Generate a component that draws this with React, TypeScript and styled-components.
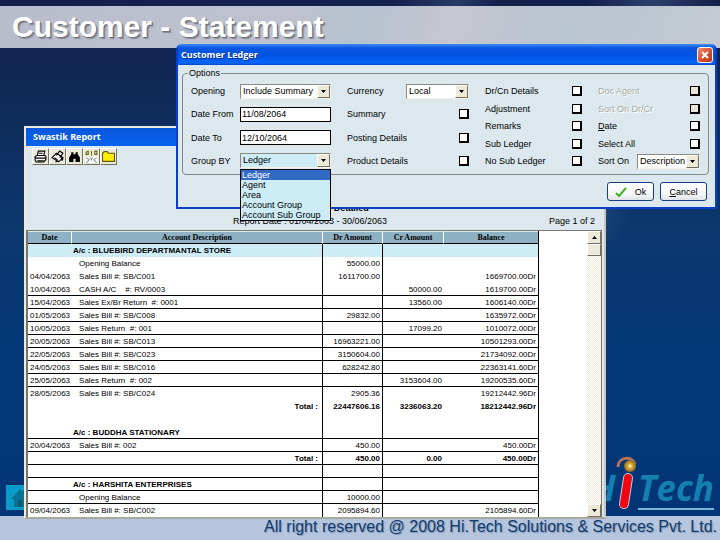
import React from "react";
import styled, { createGlobalStyle } from "styled-components";

const face = "#dde8ee";

const GlobalStyle = createGlobalStyle`
  * { box-sizing: border-box; }
  body { margin: 0; font-family: "Liberation Sans", Arial, sans-serif; color: #000; }
  button, input, select { font: inherit; color: inherit; margin: 0; padding: 0; }
`;

const Slide = styled.div`
  position: relative;
  min-height: 100vh;
  display: flex;
  flex-direction: column;
  overflow: hidden;
  background:
    linear-gradient(112deg, transparent 48%, #5d83ad44 56%, transparent 61%, transparent 72%, #6f93b944 80%, transparent 88%) top / 100% 240px no-repeat,
    linear-gradient(180deg, #13204c 0%, #102a58 18%, #0b386d 42%, #043878 65%, #033576 100%);
`;

const Heading = styled.header`
  margin-top: 6px;
  height: 42px;
  padding-left: 12px;
  display: flex;
  align-items: center;
  background: linear-gradient(112deg, #b9bccb 0%, #bfc2ce 40%, #b5c2cf 50%, #c6c6d0 62%, #b9c5d0 78%, #c4cad2 100%);
  h1 {
    margin: 0;
    font-size: 30px;
    line-height: 42px;
    color: #fff;
    white-space: nowrap;
    text-shadow: 1px 1px 0 #70747c, 2px 2px 1px #8a8d98;
  }
`;

const Scenery = styled.div`
  flex: 1;
  display: flex;
  justify-content: space-between;
  align-items: flex-end;
  padding: 0 6px 6px 6px;
`;

const HomeLink = styled.a`
  display: block;
  width: 24px;
  height: 25px;
  background: #0b9bc9;
  svg { display: block; }
`;

const Logo = styled.div`
  display: flex;
  align-items: flex-end;
  font: italic 700 35px/38px "Open Sans", sans-serif;
  color: #1580b0;
  svg { display: block; width: 22px; height: 54px; }
`;

const LogoPart = styled.span<{ $underline?: boolean }>`
  height: 41px;
  line-height: 38px;
  border-bottom: 2px solid ${(p) => (p.$underline ? "#74b9dd" : "transparent")};
`;

const Footer = styled.footer`
  height: 24px;
  padding-right: 3px;
  background: linear-gradient(90deg, #b3c4dc, #b5c6de);
  text-align: right;
  font-size: 16px;
  line-height: 22px;
  color: #123a6c;
  white-space: nowrap;
  text-shadow: 1px 1px 1px #8297b6;
`;

const ReportWindow = styled.section`
  position: absolute;
  left: 24px;
  right: 114px;
  top: 126px;
  border: 2px solid #eceade;
  border-right-color: #c9c8be;
  border-bottom-color: #a8a89f;
  background: ${face};
`;

const ReportTitle = styled.h2`
  margin: 0;
  height: 18px;
  padding-left: 7px;
  font: 700 9px/18px "Open Sans", sans-serif;
  color: #fff;
  background: linear-gradient(180deg, #0a56dd, #0863f0);
`;

const Toolbar = styled.div`
  display: flex;
  padding: 2px 6px 0;
`;

const ToolButton = styled.button`
  width: 17px;
  height: 17px;
  display: grid;
  place-items: center;
  background: #ece9d8;
  border: 1px solid #fff;
  border-right-color: #716f64;
  border-bottom-color: #716f64;
  svg { display: block; }
`;

const ReportCaption = styled.div`
  position: relative;
  height: 65px;
  padding: 37px 10px 0 0;
  text-align: center;
  font-size: 9px;
  line-height: 13px;
  b, span { display: block; }
`;

const PageCount = styled.span`
  position: absolute;
  right: 9px;
  bottom: 2px;
`;

const Sheet = styled.div`
  display: flex;
  margin: 0 2px 0 0;
  border: 1px solid #77776f;
  border-width: 1px 1px 0 2px;
  background: #fff;
`;

const Ledger = styled.table`
  flex: 1;
  min-width: 0;
  margin-right: 48px;
  table-layout: fixed;
  border-collapse: separate;
  border-spacing: 0;
  border-right: 1px solid #000;
  font-size: 8px;
  line-height: 10px;
  white-space: nowrap;
  th, td { height: 13px; padding: 0 2px; overflow: hidden; }
  td { padding-top: 2px; }
  th {
    font: 700 8px/11px "Liberation Serif", serif;
    background: #8fb1c4;
    border-bottom: 1px solid #000;
    border-top: 1px solid #dfeaf0;
    border-right: 1px solid #fff;
  }
  th:last-child { border-right: 0; }
`;

const Row = styled.tr<{ $line?: boolean; $bold?: boolean; $tint?: boolean }>`
  background: ${(p) => (p.$tint ? "#cdecf6" : "#fff")};
  font-weight: ${(p) => (p.$bold ? 700 : 400)};
  td {
    border-bottom: ${(p) => (p.$line ? "1px solid #000" : "0")};
    padding-bottom: ${(p) => (p.$line ? 0 : 1)}px;
  }
`;

const DateCell = styled.td``;
const TextCell = styled.td<{ $kind: "account" | "entry" | "total" }>`
  && { padding-left: ${(p) => (p.$kind === "account" ? 1 : 7)}px; padding-right: 4px; }
  text-align: ${(p) => (p.$kind === "total" ? "right" : "left")};
  border-right: 1px solid #000;
  white-space: pre;
`;
const AmountCell = styled.td<{ $rule?: boolean }>`
  text-align: right;
  border-right: ${(p) => (p.$rule ? "1px solid #000" : "0")};
`;

const ScrollBar = styled.div`
  width: 14px;
  display: flex;
  flex-direction: column;
  background: repeating-conic-gradient(#ece9d8 0 25%, #fff 0 50%) 0 0 / 2px 2px;
`;

const ScrollButton = styled.button`
  height: 13px;
  display: grid;
  place-items: center;
  background: #ece9d8;
  border: 1px solid #fff;
  border-right-color: #716f64;
  border-bottom-color: #716f64;
`;

const Thumb = styled.div`
  height: 12px;
  margin-bottom: auto;
  background: #ece9d8;
  border: 1px solid #fff;
  border-right-color: #716f64;
  border-bottom-color: #716f64;
`;

const Dialog = styled.section`
  position: absolute;
  left: 176px;
  right: 3px;
  top: 44px;
  z-index: 2;
  border: 2px solid #0a3cc4;
  border-top: 0;
  border-radius: 6px 6px 0 0;
  background: ${face};
  font-size: 9px;
  line-height: 14px;
`;

const DialogTitle = styled.div`
  height: 21px;
  display: flex;
  align-items: center;
  justify-content: space-between;
  padding: 0 2px 0 3px;
  border-radius: 4px 4px 0 0;
  background: linear-gradient(180deg, #3d8cf7 0, #0a56e0 4px, #0054e3 12px, #0566fb 19px, #0846c4 21px);
  color: #fff;
  h2 { margin: 0; font: 700 9px/20px "Open Sans", sans-serif; text-shadow: 1px 1px 0 #0a2f8c; }
`;

const CloseButton = styled.button`
  width: 16px;
  height: 16px;
  display: grid;
  place-items: center;
  border: 1px solid #fff;
  border-radius: 3px;
  background: linear-gradient(135deg, #ee8a6c, #d8482a 60%, #b83517);
`;

const Options = styled.fieldset`
  margin: 1px 6px 0 4px;
  border: 1px solid #7f8a8a;
  border-radius: 4px;
  padding: 4px 8px 6px;
  height: 109px;
  display: grid;
  grid-template-columns: 140px 122px 97px 1fr;
  column-gap: 16px;
  legend { padding: 0 1px; margin-left: -3px; line-height: 14px; height: 14px; }
`;

const Column = styled.div`
  height: 84px;
  display: flex;
  flex-direction: column;
  justify-content: space-between;
`;

const Field = styled.label<{ $disabled?: boolean }>`
  position: relative;
  height: 14px;
  display: flex;
  align-items: center;
  justify-content: space-between;
  white-space: nowrap;
  color: ${(p) => (p.$disabled ? "#a9aca6" : "#000")};
  text-shadow: ${(p) => (p.$disabled ? "1px 1px 0 #fff" : "none")};
`;

const Tick = styled.input`
  appearance: none;
  width: 10px;
  height: 10px;
  border: 2px solid #000;
  border-width: 1px 2px 2px 1px;
  background: #fff;
  &:checked { background: #316ac5; }
  &:disabled { background: #e9e6d6; }
`;

const DateInput = styled.input`
  width: 91px;
  height: 15px;
  border: 1px solid #000;
  border-radius: 0;
  background: #fff;
  padding-left: 1px;
`;

const Picker = styled.span<{ $w: number; $tint?: boolean }>`
  width: ${(p) => p.$w}px;
  height: 15px;
  display: grid;
  border: 1px solid #8b8a80;
  border-right-color: #f4f2e8;
  border-bottom-color: #f4f2e8;
  background: ${(p) => (p.$tint ? "#cdecf6" : "#fff")};
  select {
    grid-area: 1 / 1;
    appearance: none;
    min-width: 0;
    width: 100%;
    height: 13px;
    padding-left: 2px;
    border: 0;
    border-radius: 0;
    background: transparent;
    line-height: 13px;
  }
`;

const PickerArrow = styled.span`
  grid-area: 1 / 1;
  justify-self: end;
  width: 13px;
  height: 13px;
  display: grid;
  place-items: center;
  pointer-events: none;
  background: #ece9d8;
  border: 1px solid #fff;
  border-right-color: #716f64;
  border-bottom-color: #716f64;
`;

const Menu = styled.ul`
  position: absolute;
  right: 0;
  top: 15px;
  width: 91px;
  margin: 0;
  padding: 0;
  border: 1px solid #000;
  background: #cdecf6;
  list-style: none;
  line-height: 10px;
`;

const MenuItem = styled.li<{ $on: boolean }>`
  padding-left: 1px;
  background: ${(p) => (p.$on ? "#316ac5" : "transparent")};
  color: ${(p) => (p.$on ? "#fff" : "#000")};
`;

const Actions = styled.div`
  display: flex;
  justify-content: flex-end;
  gap: 6px;
  padding: 7px 8px 6px;
`;

const ActionButton = styled.button`
  width: 47px;
  height: 19px;
  display: flex;
  align-items: center;
  justify-content: center;
  gap: 8px;
  border: 1px solid #12407c;
  border-radius: 3px;
  background: linear-gradient(180deg, #fff, #f3f5f5 70%, #dfe3e6);
`;

const Arrow = ({ up = false }: { up?: boolean }) => (
  <svg width="5" height="3" viewBox="0 0 5 3" aria-hidden="true">
    <path d={up ? "M0 3H5L2.500 0Z" : "M0 0H5L2.500 3Z"} fill="#000" />
  </svg>
);

const Check = ({ label, disabled, children }: { label?: string; disabled?: boolean; children?: React.ReactNode }) => (
  <Field $disabled={disabled}>
    <span>{children ?? label}</span>
    <Tick type="checkbox" disabled={disabled} />
  </Field>
);

const Choice = ({ label, w, options, tint, children }: { label: string; w: number; options: string[]; tint?: boolean; children?: React.ReactNode }) => (
  <Field>
    <span>{label}</span>
    <Picker $w={w} $tint={tint}>
      <select aria-label={label}>{options.map((o) => <option key={o}>{o}</option>)}</select>
      <PickerArrow><Arrow /></PickerArrow>
    </Picker>
    {children}
  </Field>
);

type Entry = { date?: string; text?: string; dr?: string; cr?: string; bal?: string; kind?: "account" | "total"; line?: boolean; tint?: boolean };

const entries: Entry[] = [
  { text: "A/c : BLUEBIRD DEPARTMANTAL STORE", kind: "account", tint: true },
  { text: "Opening Balance", dr: "55000.00" },
  { date: "04/04/2063", text: "Sales Bill #: SB/C001", dr: "1611700.00", bal: "1669700.00Dr" },
  { date: "10/04/2063", text: "CASH A/C    #: RV/0003", cr: "50000.00", bal: "1619700.00Dr", line: true },
  { date: "15/04/2063", text: "Sales Ex/Br Return  #: 0001", cr: "13560.00", bal: "1606140.00Dr", line: true },
  { date: "01/05/2063", text: "Sales Bill #: SB/C008", dr: "29832.00", bal: "1635972.00Dr", line: true },
  { date: "10/05/2063", text: "Sales Return  #: 001", cr: "17099.20", bal: "1010072.00Dr", line: true },
  { date: "20/05/2063", text: "Sales Bill #: SB/C013", dr: "16963221.00", bal: "10501293.00Dr", line: true },
  { date: "22/05/2063", text: "Sales Bill #: SB/C023", dr: "3150604.00", bal: "21734092.00Dr", line: true },
  { date: "24/05/2063", text: "Sales Bill #: SB/C016", dr: "628242.80", bal: "22363141.60Dr", line: true },
  { date: "25/05/2063", text: "Sales Return  #: 002", cr: "3153604.00", bal: "19200535.60Dr", line: true },
  { date: "28/05/2063", text: "Sales Bill #: SB/C024", dr: "2905.36", bal: "19212442.96Dr" },
  { text: "Total :", dr: "22447606.16", cr: "3236063.20", bal: "18212442.96Dr", kind: "total" },
  {},
  { text: "A/c : BUDDHA STATIONARY", kind: "account", line: true },
  { date: "20/04/2063", text: "Sales Bill #: 002", dr: "450.00", bal: "450.00Dr", line: true },
  { text: "Total :", dr: "450.00", cr: "0.00", bal: "450.00Dr", kind: "total", line: true },
  { line: true },
  { text: "A/c : HARSHITA ENTERPRISES", kind: "account", line: true },
  { text: "Opening Balance", dr: "10000.00", line: true },
  { date: "09/04/2063", text: "Sales Bill #: SB/C002", dr: "2095894.60", bal: "2105894.60Dr" },
];

const tools: { name: string; art: React.ReactNode }[] = [
  { name: "Print", art: <><path d="M4 1h6l-1 4H3zM1 6l2-1h7l1 1v3l-2 2H2L1 9z" fill="#fff" stroke="#000" /><path d="M1 7.500h10M4 3h4M3 10h6" stroke="#000" /></> },
  { name: "Printer setup", art: <><path d="M1 7l4-4 6 4-4 4z" fill="#fff" stroke="#000" /><path d="M5 5l3-4 3 2-3 4M3 7l3 2M4 11l3-1" fill="none" stroke="#000" /><path d="M9 7l2 1-1 2" stroke="#000" /></> },
  { name: "Find", art: <path d="M3 2h2v2h2V2h2v2l2 3v4H7V8H5v3H1V7l2-3z" fill="#000" /> },
  { name: "Columns", art: <><path d="M1 2l2-1v3H1zM6 1v4M9 1h2v3H9z" fill="none" stroke="#6d6a13" /><path d="M0 6h12v6H0z" fill="#fff" /><path d="M1 7l3 2-3 3M11 7L8 9l3 3M5 7l1 2 1-2" stroke="#999" fill="none" /></> },
  { name: "Open folder", art: <path d="M0.500 3L2 1.500h3L6 3h5.500v7.500H0.500z" fill="#ffee00" stroke="#5d5a14" /> },
];

const groups = ["Ledger", "Agent", "Area", "Account Group", "Account Sub Group"];

export default function App() {
  return (
    <Slide>
      <GlobalStyle />
      <Heading><h1>Customer - Statement</h1></Heading>
      <Scenery>
        <HomeLink href="#home" aria-label="Home">
          <svg width="24" height="25" viewBox="0 0 24 25"><path d="M5 14L14 4l3 3V5h3v5l3 4h-3v8H8v-8z" fill="#087393" /><path d="M12 15h4v7h-4z" fill="#0a5a78" /></svg>
        </HomeLink>
        <Logo>
          <LogoPart>H</LogoPart>
          <svg viewBox="0 0 22 54" role="img" aria-label="i">
            <defs><radialGradient id="gold"><stop offset="0" stopColor="#fff3b0" /><stop offset="0.500" stopColor="#c99d2e" /><stop offset="1" stopColor="#8b6a22" /></radialGradient></defs>
            <path d="M12 22L8 48" stroke="#c9c5d8" strokeWidth="10" strokeLinecap="round" />
            <path d="M12 22L8 48" stroke="#f10510" strokeWidth="8" strokeLinecap="round" />
            <path d="M2 11C2 1 16-1 19 8" stroke="#b9735c" strokeWidth="3" fill="none" />
            <circle cx="14" cy="10" r="6" fill="url(#gold)" />
          </svg>
          <LogoPart $underline>Tech</LogoPart>
        </Logo>
      </Scenery>
      <Footer>All right reserved @ 2008 Hi.Tech Solutions &amp; Services Pvt. Ltd.</Footer>

      <ReportWindow>
        <ReportTitle>Swastik Report</ReportTitle>
        <Toolbar>
          {tools.map((t) => (
            <ToolButton key={t.name} type="button" aria-label={t.name}>
              <svg width="13" height="13" viewBox="0 0 12 12">{t.art}</svg>
            </ToolButton>
          ))}
        </Toolbar>
        <ReportCaption>
          <b>Customer Ledger - Detailed</b>
          <span>Report Date : 01/04/2063 - 30/06/2063</span>
          <PageCount>Page 1 of 2</PageCount>
        </ReportCaption>
        <Sheet>
          <Ledger>
            <colgroup>
              <col width="44" /><col /><col width="60" /><col width="61" /><col width="94" />
            </colgroup>
            <thead>
              <tr><th>Date</th><th>Account Description</th><th>Dr Amount</th><th>Cr Amount</th><th>Balance</th></tr>
            </thead>
            <tbody>
              {entries.map((e, i) => (
                <Row key={i} $line={e.line} $bold={!!e.kind} $tint={e.tint}>
                  <DateCell>{e.date}</DateCell>
                  <TextCell $kind={e.kind ?? "entry"}>{e.text}</TextCell>
                  <AmountCell $rule>{e.dr}</AmountCell>
                  <AmountCell>{e.cr}</AmountCell>
                  <AmountCell>{e.bal}</AmountCell>
                </Row>
              ))}
            </tbody>
          </Ledger>
          <ScrollBar>
            <ScrollButton type="button" aria-label="Scroll up"><Arrow up /></ScrollButton>
            <Thumb />
            <ScrollButton type="button" aria-label="Scroll down"><Arrow /></ScrollButton>
          </ScrollBar>
        </Sheet>
      </ReportWindow>

      <Dialog role="dialog" aria-label="Customer Ledger">
        <DialogTitle>
          <h2>Customer Ledger</h2>
          <CloseButton type="button" aria-label="Close">
            <svg width="8" height="8" viewBox="0 0 8 8"><path d="M1 1l6 6M7 1L1 7" stroke="#fff" strokeWidth="2" /></svg>
          </CloseButton>
        </DialogTitle>
        <Options>
          <legend>Options</legend>
          <Column>
            <Choice label="Opening" w={91} options={["Include Summary"]} />
            <Field><span>Date From</span><DateInput defaultValue="11/08/2064" /></Field>
            <Field><span>Date To</span><DateInput defaultValue="12/10/2064" /></Field>
            <Choice label="Group BY" w={91} options={groups} tint>
              <Menu role="listbox">
                {groups.map((g, i) => <MenuItem key={g} role="option" aria-selected={i === 0} $on={i === 0}>{g}</MenuItem>)}
              </Menu>
            </Choice>
          </Column>
          <Column>
            <Choice label="Currency" w={63} options={["Local"]} />
            <Check label="Summary" />
            <Check label="Posting Details" />
            <Check label="Product Details" />
          </Column>
          <Column>
            <Check label="Dr/Cn Details" />
            <Check label="Adjustment" />
            <Check label="Remarks" />
            <Check label="Sub Ledger" />
            <Check label="No Sub Ledger" />
          </Column>
          <Column>
            <Check label="Doc Agent" disabled />
            <Check label="Sort On Dr/Cr" disabled />
            <Check><u>D</u>ate</Check>
            <Check label="Select All" />
            <Choice label="Sort On" w={63} options={["Description"]} />
          </Column>
        </Options>
        <Actions>
          <ActionButton type="button">
            <svg width="12" height="10" viewBox="0 0 12 10" aria-hidden="true"><path d="M1 6l3 3 7-8" stroke="#43b02a" strokeWidth="2" fill="none" /></svg>
            Ok
          </ActionButton>
          <ActionButton type="button"><span><u>C</u>ancel</span></ActionButton>
        </Actions>
      </Dialog>
    </Slide>
  );
}
